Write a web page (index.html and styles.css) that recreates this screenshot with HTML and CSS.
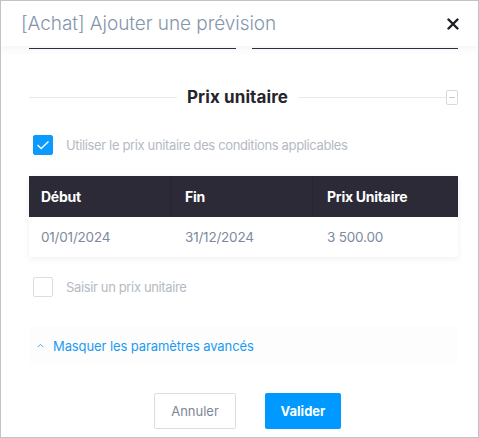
FILE: index.html
```html
<!DOCTYPE html>
<html lang="fr">
<head>
<meta charset="utf-8">
<title>Prévision</title>
<link rel="stylesheet" href="styles.css">
</head>
<body>
<div class="modal">
  <header class="modal-header">
    <h1 class="modal-title">[Achat] Ajouter une prévision</h1>
    <button class="close" aria-label="Fermer">
      <svg width="12" height="12" viewBox="0 0 12 12"><path d="M1.5 1.5L10.5 10.5M10.5 1.5L1.5 10.5" stroke="#1e1e24" stroke-width="2.4" stroke-linecap="round"/></svg>
    </button>
  </header>
  <div class="modal-body">
    <div class="fields">
      <div class="field"></div>
      <div class="field"></div>
    </div>
    <div class="section-title">
      <span class="line"></span>
      <span class="section-label">Prix unitaire</span>
      <span class="line"></span>
      <span class="collapse"><span class="minus"></span></span>
    </div>
    <label class="check-row">
      <span class="checkbox checked">
        <svg width="14" height="10" viewBox="0 0 14 10"><path d="M1.5 5L5.2 8.5L12.5 1.5" stroke="#fff" stroke-width="1.3" fill="none"/></svg>
      </span>
      <span class="check-label">Utiliser le prix unitaire des conditions applicables</span>
    </label>
    <div class="table">
      <div class="thead">
        <div class="th">Début</div>
        <div class="th">Fin</div>
        <div class="th">Prix Unitaire</div>
      </div>
      <div class="trow">
        <div class="td">01/01/2024</div>
        <div class="td">31/12/2024</div>
        <div class="td">3 500.00</div>
      </div>
    </div>
    <label class="check-row second">
      <span class="checkbox"></span>
      <span class="check-label">Saisir un prix unitaire</span>
    </label>
    <div class="advanced">
      <svg class="chev" width="7" height="5" viewBox="0 0 7 5"><path d="M0.8 4L3.5 1.3L6.2 4" stroke="#3aa8f2" stroke-width="1" fill="none"/></svg>
      <span class="advanced-link">Masquer les paramètres avancés</span>
    </div>
    <div class="actions">
      <button class="btn btn-cancel">Annuler</button>
      <button class="btn btn-ok">Valider</button>
    </div>
  </div>
</div>
</body>
</html>
```
FILE: styles.css
```css
* { box-sizing: border-box; }
html, body { margin: 0; padding: 0; }
body {
  font-family: Inter, "Liberation Sans", sans-serif;
  background: #fff;
}
.modal {
  width: 479px;
  height: 438px;
  border: 1px solid #c3c3c3;
  background: #fff;
  display: flex;
  flex-direction: column;
  overflow: hidden;
}
.modal-header {
  height: 45px;
  flex: none;
  display: flex;
  align-items: center;
  justify-content: space-between;
  padding: 0 18px 0 20px;
  background: #fff;
  position: relative;
  z-index: 2;
  box-shadow: 0 3px 8px rgba(60, 70, 110, 0.06);
}
.modal-title {
  margin: 0;
  font-size: 19px;
  font-weight: 300;
  color: #8595ab;
  letter-spacing: -0.05px;
}
.close {
  border: 0;
  background: none;
  padding: 0;
  width: 14px;
  height: 14px;
  display: flex;
  align-items: center;
  justify-content: center;
  margin-top: 0;
}
.modal-body {
  padding: 0 20px 0 28px;
  flex: 1;
  display: flex;
  flex-direction: column;
}
.fields {
  display: flex;
  gap: 16px;
  margin-top: 2px;
}
.field {
  flex: 1;
  height: 1px;
  background: #2d2e45;
}
.section-title {
  display: flex;
  align-items: center;
  margin-top: 41px;
  height: 14px;
}
.line {
  flex: 1;
  height: 1px;
  background: #e8e9ec;
}
.section-label {
  font-weight: 700;
  font-size: 17px;
  color: #25252c;
  padding: 0 10px;
  letter-spacing: 0.1px;
}
.collapse {
  width: 12px;
  height: 15px;
  border: 1px solid #d8d9dd;
  border-radius: 2px;
  display: flex;
  align-items: center;
  justify-content: center;
}
.minus {
  width: 6px;
  height: 1px;
  background: #c5c7cc;
}
.check-row {
  display: flex;
  align-items: center;
  gap: 13px;
  margin-top: 31px;
  padding-left: 4px;
}
.checkbox {
  width: 20px;
  height: 20px;
  border: 1px solid #dcdde1;
  border-radius: 2px;
  display: flex;
  align-items: center;
  justify-content: center;
  flex: none;
}
.checkbox.checked {
  background: #0b9bff;
  border-color: #0b9bff;
}
.check-label {
  font-size: 13px;
  color: #b4bac4;
  letter-spacing: -0.36px;
}
.table {
  margin-top: 21px;
  box-shadow: 0 2px 6px rgba(70, 80, 110, 0.08);
}
.thead, .trow {
  display: grid;
  grid-template-columns: 142px 142px 1fr;
}
.thead {
  background: #2b2a36;
  height: 41px;
}
.th {
  color: #fff;
  font-weight: 700;
  font-size: 14px;
  display: flex;
  align-items: center;
  padding-left: 12px;
  border-right: 1px solid #262530;
  letter-spacing: -0.25px;
}
.th:last-child { border-right: 0; }
.th:nth-child(n+2), .td:nth-child(n+2) { padding-left: 14px; }
.trow { height: 40px; background: #fff; }
.td {
  display: flex;
  align-items: center;
  padding-left: 12px;
  font-size: 13.5px;
  color: #7d8aa0;
  letter-spacing: -0.2px;
}
.check-row.second { margin-top: 20px; }
.advanced {
  margin-top: 29px;
  height: 37px;
  display: flex;
  align-items: center;
  gap: 9px;
  padding: 3px 0 0 8px;
  background: #fdfdfe;
}
.chev { margin-top: -2px; }
.advanced-link {
  font-size: 13px;
  color: #1c9bf0;
  letter-spacing: -0.1px;
}
.actions {
  display: flex;
  justify-content: center;
  gap: 29px;
  margin-top: 30px;
  padding-left: 8px;
}
.btn {
  height: 36px;
  border-radius: 2px;
  font-family: Inter, "Liberation Sans", sans-serif;
  font-size: 13px;
  padding: 0;
}
.btn-cancel {
  width: 82px;
  border: 1px solid #dcdde1;
  background: #fff;
  color: #7e8698;
}
.btn-ok {
  width: 76px;
  border: 0;
  background: #0099ff;
  color: #fff;
  font-weight: 700;
}
```
